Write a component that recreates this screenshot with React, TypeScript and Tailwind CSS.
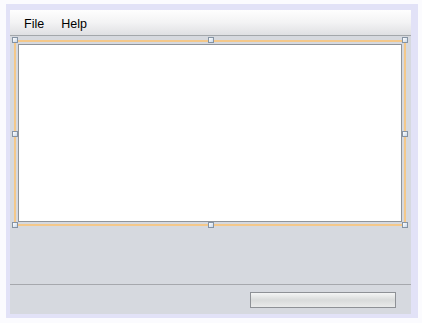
import React from 'react';

const handlePos = [
  'left-[-4px] top-[-5px]',
  'left-[192px] top-[-5px]',
  'right-[-4px] top-[-5px]',
  'left-[-4px] top-[89px]',
  'right-[-4px] top-[89px]',
  'left-[-4px] bottom-[-4px]',
  'left-[192px] bottom-[-4px]',
  'right-[-4px] bottom-[-4px]',
];

export default function App() {
  return (
    <div className="w-[422px] h-[323px] bg-[#fbfbfe] pt-[4px] pl-[6px] pr-[4px] pb-[5px] font-['Liberation_Sans',Arial,sans-serif]">
      <div className="w-full h-full border-[#e2e2f7] border-t-[6px] border-l-[4px] border-r-[7px] border-b-[4px] flex flex-col">
        {/* menu bar */}
        <div className="h-[26px] shrink-0 bg-gradient-to-b from-[#fefefe] via-[#f3f3f4] to-[#dfe0e3] border-b border-[#a3a7ab] flex items-center pt-[3px] pl-[14px] gap-[17px] text-[12.5px] text-black">
          <span>File</span>
          <span>Help</span>
        </div>

        <div className="flex-1 bg-[#d6d9df] flex flex-col">
          {/* selected panel */}
          <div className="relative ml-[4px] mt-[4px] w-[392px] h-[186px] border-2 border-[#f4c88a] p-[2px]">
            <div className="w-full h-full bg-white border border-[#8f949a]" />
            {handlePos.map((p) => (
              <div
                key={p}
                className={`absolute ${p} w-[6px] h-[6px] border border-[#8593a3] bg-gradient-to-br from-white to-[#c9d8ea]`}
              />
            ))}
          </div>

          <div className="flex-1" />

          {/* status bar */}
          <div className="h-[30px] border-t border-[#a6a8ad] flex justify-end items-start pt-[7px] pr-[15px]">
            <div className="w-[146px] h-[16px] border border-[#8e9196] bg-gradient-to-b from-[#f4f5f5] via-[#d9dbdb] to-[#e9eaea]" />
          </div>
        </div>
      </div>
    </div>
  );
}
